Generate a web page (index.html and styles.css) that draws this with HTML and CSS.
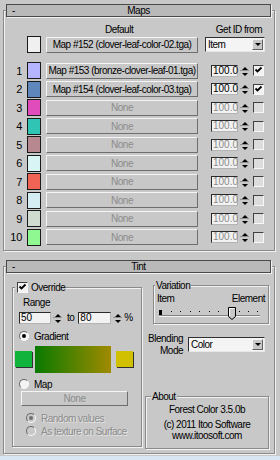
FILE: index.html
```html
<!DOCTYPE html>
<html lang="en">
<head>
  <meta charset="UTF-8">
  <title>Forest Color - Maps / Tint</title>
  <link rel="stylesheet" href="styles.css">
</head>
<body>

<div class="rollout maps">
  <div class="rollout-head"><span class="minus">-</span><span class="head-title">Maps</span><span></span></div>

  <div class="col-labels">
    <span class="lbl-default">Default</span>
    <span class="lbl-getid">Get ID from</span>
  </div>

  <div class="map-row">
    <span class="num"></span>
    <span class="swatch" style="background:#f0f0f0"></span>
    <button class="btn map-btn">Map #152 (clover-leaf-color-02.tga)</button>
    <div class="combo combo-item"><span class="combo-text">Item</span><span class="combo-arrow"></span></div>
  </div>

  <div class="map-list">
    <div class="map-row">
      <span class="num">1</span>
      <span class="swatch" style="background:#b4b4ff"></span>
      <button class="btn map-btn">Map #153 (bronze-clover-leaf-01.tga)</button>
      <span class="edit">100.0</span><span class="spin"></span>
      <span class="check"><svg viewBox="0 0 9 9" width="9" height="9"><path d="M1.5 3.5L3.5 5.5L7.5 1.5" fill="none" stroke="#000" stroke-width="1.8"/></svg></span>
    </div>
    <div class="map-row">
      <span class="num">2</span>
      <span class="swatch" style="background:#5e88bc"></span>
      <button class="btn map-btn">Map #154 (clover-leaf-color-03.tga)</button>
      <span class="edit">100.0</span><span class="spin"></span>
      <span class="check"><svg viewBox="0 0 9 9" width="9" height="9"><path d="M1.5 3.5L3.5 5.5L7.5 1.5" fill="none" stroke="#000" stroke-width="1.8"/></svg></span>
    </div>
    <div class="map-row">
      <span class="num">3</span>
      <span class="swatch" style="background:#e04cbc"></span>
      <button class="btn map-btn off">None</button>
      <span class="edit off">100.0</span><span class="spin"></span>
      <span class="check off"></span>
    </div>
    <div class="map-row">
      <span class="num">4</span>
      <span class="swatch" style="background:#30c4b4"></span>
      <button class="btn map-btn off">None</button>
      <span class="edit off">100.0</span><span class="spin"></span>
      <span class="check off"></span>
    </div>
    <div class="map-row">
      <span class="num">5</span>
      <span class="swatch" style="background:#b88890"></span>
      <button class="btn map-btn off">None</button>
      <span class="edit off">100.0</span><span class="spin"></span>
      <span class="check off"></span>
    </div>
    <div class="map-row">
      <span class="num">6</span>
      <span class="swatch" style="background:#d8f4f4"></span>
      <button class="btn map-btn off">None</button>
      <span class="edit off">100.0</span><span class="spin"></span>
      <span class="check off"></span>
    </div>
    <div class="map-row">
      <span class="num">7</span>
      <span class="swatch" style="background:#f06456"></span>
      <button class="btn map-btn off">None</button>
      <span class="edit off">100.0</span><span class="spin"></span>
      <span class="check off"></span>
    </div>
    <div class="map-row">
      <span class="num">8</span>
      <span class="swatch" style="background:#d4ecf4"></span>
      <button class="btn map-btn off">None</button>
      <span class="edit off">100.0</span><span class="spin"></span>
      <span class="check off"></span>
    </div>
    <div class="map-row">
      <span class="num">9</span>
      <span class="swatch" style="background:#d0dcd0"></span>
      <button class="btn map-btn off">None</button>
      <span class="edit off">100.0</span><span class="spin"></span>
      <span class="check off"></span>
    </div>
    <div class="map-row">
      <span class="num">10</span>
      <span class="swatch" style="background:#90f890"></span>
      <button class="btn map-btn off">None</button>
      <span class="edit off">100.0</span><span class="spin"></span>
      <span class="check off"></span>
    </div>
  </div>
</div>

<div class="rollout tint">
  <div class="rollout-head"><span class="minus">-</span><span class="head-title">Tint</span><span></span></div>

  <div class="tint-body">
    <div class="group override">
      <div class="legend">
        <span class="check"><svg viewBox="0 0 9 9" width="9" height="9"><path d="M1.5 3.5L3.5 5.5L7.5 1.5" fill="none" stroke="#000" stroke-width="1.8"/></svg></span>
        <span>Override</span>
      </div>

      <div class="range-label">Range</div>
      <div class="range-row">
        <span class="edit range-edit">50</span><span class="spin"></span>
        <span class="to">to</span>
        <span class="edit range-edit wide">80</span><span class="spin"></span>
        <span class="pct">%</span>
      </div>

      <div class="radio-row grad-radio"><span class="radio on"></span><span>Gradient</span></div>
      <div class="grad-row">
        <span class="cswatch" style="background:#10b43c"></span>
        <span class="grad-bar"></span>
        <span class="cswatch" style="background:#d0c000"></span>
      </div>

      <div class="radio-row map-radio"><span class="radio"></span><span>Map</span></div>
      <button class="btn none-btn off">None</button>

      <div class="radio-row sub-radio first"><span class="radio dis on"></span><span class="dis-text">Random values</span></div>
      <div class="radio-row sub-radio"><span class="radio dis"></span><span class="dis-text">As texture on Surface</span></div>
    </div>

    <div class="right-col">
      <div class="group variation">
        <div class="legend"><span>Variation</span></div>
        <div class="var-labels"><span>Item</span><span>Element</span></div>
        <svg class="slider" width="108" height="17" viewBox="0 0 108 17">
          <rect x="2" y="6" width="3" height="5" fill="#000"/>
          <g fill="#000">
            <rect x="14" y="7" width="1" height="1"/>
            <rect x="23" y="7" width="1" height="1"/>
            <rect x="33" y="7" width="1" height="1"/>
            <rect x="42" y="7" width="1" height="1"/>
            <rect x="52" y="7" width="1" height="1"/>
            <rect x="61" y="7" width="1" height="1"/>
            <rect x="82" y="7" width="1" height="1"/>
            <rect x="91" y="7" width="1" height="1"/>
            <rect x="100" y="7" width="1" height="1"/>
          </g>
          <path d="M2 11.5H103" stroke="#808080"/>
          <path d="M2 12.5H103" stroke="#f4f4f4"/>
          <path d="M71.5 3.5h7v9l-3.5 3-3.5-3z" fill="#c8c8c8" stroke="#000"/>
          <path d="M72.5 12V4.5h5" fill="none" stroke="#fff"/>
        </svg>
      </div>

      <div class="blend-row">
        <div class="blend-label">Blending<br>Mode</div>
        <div class="combo combo-blend"><span class="combo-text">Color</span><span class="combo-arrow"></span></div>
      </div>

      <div class="group about">
        <div class="legend"><span>About</span></div>
        <div class="about-line first">Forest Color 3.5.0b</div>
        <div class="about-line second">(c) 2011 Itoo Software</div>
        <div class="about-line">www.itoosoft.com</div>
      </div>
    </div>
  </div>
</div>

<div class="strip"></div>

</body>
</html>
```

FILE: styles.css
```css
* {
  box-sizing: border-box;
}
body {
  margin: 0;
  width: 280px;
  height: 460px;
  overflow: hidden;
  background-color: #c8c8c8;
  font-family: "Liberation Sans", Arial, sans-serif;
  font-size: 10px;
  letter-spacing: -0.5px;
  color: #000;
}

/* rollouts */
.rollout {
  width: 272px;
  margin-left: 3px;
  border: 1px solid #8a8a8a;
  box-shadow: inset 1px 1px 0 #f2f2f2, 1px 1px 0 #f2f2f2;
}
.maps {
  margin-top: 10px;
  padding-bottom: 4px;
}
.tint {
  margin-top: 15px;
}
.rollout-head {
  display: grid;
  grid-template-columns: 1fr auto 1fr;
  align-items: center;
  height: 13px;
  margin: -7px 3px 0 2px;
  background-color: #b9b9b9;
  border: 1px solid #4a4a4a;
  box-shadow: 1px 1px 0 #f2f2f2;
  line-height: 11px;
}
.minus {
  padding-left: 5px;
}

/* maps */
.col-labels {
  display: flex;
  align-items: center;
  height: 13px;
  margin-top: 6px;
}
.lbl-default {
  margin-left: 101px;
}
.lbl-getid {
  margin-left: auto;
  margin-right: 12px;
}
.map-list {
  display: flex;
  flex-direction: column;
  gap: 1.56px;
  margin-top: 9px;
}
.map-row {
  display: flex;
  align-items: center;
  height: 17px;
  padding-left: 1px;
}
.num {
  width: 17px;
  text-align: right;
  font-size: 11px;
  letter-spacing: -0.3px;
}
.swatch {
  width: 14px;
  height: 17px;
  margin-left: 5px;
  border: 1px solid #1a1a1a;
}
.btn {
  padding: 0;
  font: inherit;
  letter-spacing: inherit;
  color: #000;
  background-color: #c8c8c8;
  border: 1px solid;
  border-color: #f4f4f4 #6e6e6e #6e6e6e #f4f4f4;
  white-space: nowrap;
  overflow: hidden;
}
.btn.off {
  color: #8c8c8c;
}
.map-btn {
  width: 152px;
  height: 16px;
  margin-left: 5px;
}
.edit {
  width: 27px;
  height: 12px;
  margin-left: 13px;
  padding-left: 1px;
  background-color: #f2f2f2;
  border: 1px solid;
  border-color: #2a2a2a #b4b4b4 #b4b4b4 #2a2a2a;
  line-height: 10px;
  letter-spacing: 0;
}
.edit.off {
  color: #8c8c8c;
}
.spin {
  display: flex;
  flex-direction: column;
  justify-content: space-between;
  align-items: center;
  width: 9px;
  height: 12px;
  margin-left: 2px;
  padding: 2px 0 1px;
  background: linear-gradient(#c8c8c8 5px, #909090 5px, #909090 6px, #c8c8c8 6px);
}
.spin::before {
  content: "";
  border: 3px solid transparent;
  border-top: 0;
  border-bottom-color: #000;
}
.spin::after {
  content: "";
  border: 3px solid transparent;
  border-bottom: 0;
  border-top-color: #000;
}
.check {
  display: flex;
  width: 11px;
  height: 11px;
  margin-left: 4px;
  background-color: #f2f2f2;
  border: 1px solid;
  border-color: #404040 #f8f8f8 #f8f8f8 #404040;
}
.check.off {
  background-color: #dcdcdc;
}

/* combo boxes */
.combo {
  display: flex;
  align-items: center;
  height: 15px;
  background-color: #f4f4f4;
  border: 1px solid;
  border-color: #303030 #e8e8e8 #e8e8e8 #303030;
}
.combo-text {
  flex: 1;
  padding-left: 2px;
}
.combo-arrow {
  display: flex;
  justify-content: center;
  align-items: center;
  width: 11px;
  height: 11px;
  margin-right: 1px;
  background-color: #c8c8c8;
  border: 1px solid;
  border-color: #f4f4f4 #606060 #606060 #f4f4f4;
}
.combo-arrow::after {
  content: "";
  border: 3px solid transparent;
  border-bottom: 0;
  border-top-color: #000;
}
.combo-item {
  width: 60px;
  margin-left: 7px;
}

/* tint */
.tint-body {
  display: flex;
  height: 180px;
  padding-left: 8px;
}
.group {
  border: 1px solid #8a8a8a;
  box-shadow: inset 1px 1px 0 #f2f2f2, 1px 1px 0 #f2f2f2;
}
.legend {
  display: flex;
  align-items: center;
  gap: 3px;
  width: max-content;
  height: 11px;
  margin-top: -6px;
  margin-left: 2px;
  padding: 0 1px;
  background-color: #c8c8c8;
}
.legend .check {
  margin-left: 1px;
}
.override {
  width: 130px;
  height: 160px;
  margin-top: 14px;
}
.range-label {
  margin: 4px 0 0 10px;
  line-height: 12px;
}
.range-row {
  display: flex;
  align-items: center;
  height: 12px;
  margin: 3px 0 0 6px;
}
.range-edit {
  width: 32px;
  margin-left: 0;
}
.range-edit.wide {
  width: 33px;
}
.to {
  margin: 0 4px 0 5px;
}
.pct {
  margin-left: 2px;
}
.radio-row {
  display: flex;
  align-items: center;
  gap: 5px;
  height: 11px;
  margin-left: 6px;
}
.grad-radio {
  margin-top: 7px;
}
.map-radio {
  margin-top: 6px;
}
.sub-radio {
  margin-left: 13px;
  margin-top: 2px;
}
.sub-radio.first {
  margin-top: 7px;
}
.radio {
  display: flex;
  justify-content: center;
  align-items: center;
  width: 10px;
  height: 10px;
  border-radius: 50%;
  background-color: #f4f4f4;
  border: 1px solid;
  border-color: #6a6a6a #fafafa #fafafa #6a6a6a;
}
.radio.on::after {
  content: "";
  width: 4px;
  height: 4px;
  border-radius: 50%;
  background-color: #000;
}
.radio.dis {
  background-color: #c8c8c8;
}
.radio.dis.on::after {
  background-color: #707070;
}
.dis-text {
  color: #8c8c8c;
  text-shadow: 1px 1px 0 #e4e4e4;
}
.grad-row {
  display: flex;
  align-items: center;
  height: 27px;
  margin: 4px 0 0 2px;
}
.cswatch {
  width: 17px;
  height: 16px;
  box-shadow: 1px 1px 0 #303030;
}
.grad-bar {
  width: 76px;
  height: 27px;
  margin: 0 5px 0 3px;
  background: linear-gradient(to right, #087a00, #a08a00);
}
.none-btn {
  display: block;
  width: 107px;
  height: 15px;
  margin: 1px 0 0 8px;
}

.right-col {
  width: 124px;
  margin-left: 3px;
}
.variation {
  width: 116px;
  height: 39px;
  margin: 12px 0 0 8px;
}
.variation .legend {
  margin-left: 1px;
}
.var-labels {
  display: flex;
  justify-content: space-between;
  margin: 2px 3px 0;
  line-height: 11px;
}
.slider {
  display: block;
  margin-left: 3px;
}
.blend-row {
  display: flex;
  height: 24px;
  margin-top: 9px;
}
.blend-label {
  width: 38px;
  text-align: right;
  line-height: 12px;
}
.combo-blend {
  width: 77px;
  margin: 4px 0 0 5px;
}
.about {
  height: 53px;
  margin-top: 39px;
}
.about .legend {
  margin-left: 5px;
}
.about-line {
  text-align: center;
  line-height: 11px;
}
.about-line.first {
  margin-top: 2px;
}
.about-line.second {
  margin-top: 4px;
}

.strip {
  height: 4px;
  margin-top: 2px;
  background-color: #d8e6f4;
}
```
